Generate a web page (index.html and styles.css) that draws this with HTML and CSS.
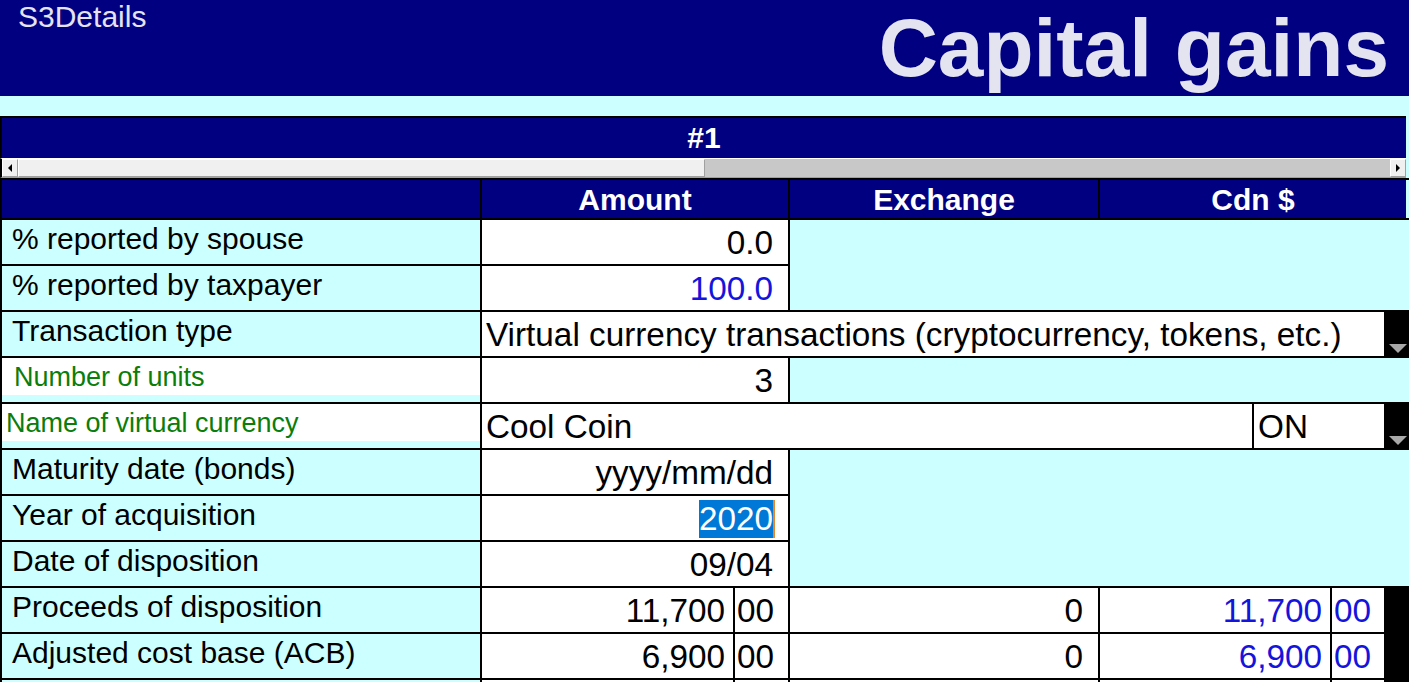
FILE: index.html
```
<!DOCTYPE html>
<html>

<head>
    <link rel="stylesheet" href="styles.css">
</head>

<body>

    <div id="header">
        <div class="form-id">S3Details</div>
        <div class="form-title">Capital gains</div>
    </div>

    <div id="band"></div>

    <div id="sheet">
        <div class="sheet-title">#1</div>
        <div class="hscroll">
            <div class="scroll-btn"><span class="arrow-left"></span></div>
            <div class="scroll-thumb"></div>
            <div class="scroll-track"></div>
            <div class="scroll-btn"><span class="arrow-right"></span></div>
        </div>

        <div class="grid">
            <!-- column heads -->
            <div class="head"></div>
            <div class="head span-2">Amount</div>
            <div class="head">Exchange</div>
            <div class="head span-4 last">Cdn $</div>

            <!-- % spouse / taxpayer -->
            <div class="label">% reported by spouse</div>
            <div class="value span-2">0.0</div>
            <div class="filler span-5 tall-2"></div>

            <div class="label">% reported by taxpayer</div>
            <div class="value span-2 blue">100.0</div>

            <!-- transaction type -->
            <div class="label">Transaction type</div>
            <div class="value left span-6">Virtual currency transactions (cryptocurrency, tokens, etc.)</div>
            <div class="drop"><span class="drop-arrow"></span></div>

            <!-- units -->
            <div class="label input"><span class="green pad">Number of units</span></div>
            <div class="value span-2">3</div>
            <div class="filler span-5"></div>

            <div class="label input"><span class="green">Name of virtual currency</span></div>
            <div class="value left span-4">Cool Coin</div>
            <div class="value left span-2 on">ON</div>
            <div class="drop"><span class="drop-arrow"></span></div>

            <!-- dates -->
            <div class="label">Maturity date (bonds)</div>
            <div class="value span-2">yyyy/mm/dd</div>
            <div class="filler span-5 tall-3"></div>

            <div class="label">Year of acquisition</div>
            <div class="value span-2 sel-cell"><span class="selected">2020</span><span class="caret"></span></div>

            <div class="label">Date of disposition</div>
            <div class="value span-2">09/04</div>

            <!-- amounts -->
            <div class="label">Proceeds of disposition</div>
            <div class="value int">11,700</div>
            <div class="value cents">00</div>
            <div class="value">0</div>
            <div class="value int span-2 blue">11,700</div>
            <div class="value cents blue">00</div>
            <div class="dark"></div>

            <div class="label">Adjusted cost base (ACB)</div>
            <div class="value int">6,900</div>
            <div class="value cents">00</div>
            <div class="value">0</div>
            <div class="value int span-2 blue">6,900</div>
            <div class="value cents blue">00</div>
            <div class="dark"></div>

            <!-- next row, only its top edge is in view -->
            <div class="label"></div>
            <div class="value int"></div>
            <div class="value cents"></div>
            <div class="value"></div>
            <div class="value int span-2"></div>
            <div class="value cents"></div>
            <div class="dark"></div>
        </div>
    </div>

</body>

</html>
```

FILE: styles.css
```
* {
    box-sizing: border-box;
}

body {
    margin: 0px;
    padding: 0px;
    background: #ccffff;
    font-family: "Liberation Sans", Arial, sans-serif;
    overflow: hidden;
}

#header {
    height: 96px;
    background: #000080;
    color: #e4e4f0;
    display: flex;
    justify-content: space-between;
    align-items: flex-start;
}

.form-id {
    font-size: 30px;
    line-height: 34px;
    padding-left: 18px;
    padding-top: 0px;
}

.form-title {
    font-size: 82px;
    font-weight: bold;
    line-height: 92px;
    padding-top: 2px;
    padding-right: 20px;
}

#band {
    height: 20px;
}

#sheet {
    width: 1409px;
}

.sheet-title {
    width: 1406px;
    height: 42px;
    border-top: 2px solid #000;
    border-left: 2px solid #000;
    background: #000080;
    color: #fff;
    font-size: 30px;
    font-weight: bold;
    text-align: center;
    line-height: 40px;
}

/* horizontal scroller under the title */
.hscroll {
    width: 1406px;
    height: 20px;
    display: flex;
    border-left: 2px solid #000;
    background: #c8c8c8;
    border-top: 1px solid #fff;
    border-bottom: 1px solid #a0a0a0;
}

.scroll-btn {
    width: 16px;
    background: #f0f0f0;
    border: 1px solid #a0a0a0;
    border-top-color: #fff;
    border-left-color: #fff;
    display: flex;
    align-items: center;
    justify-content: center;
}

.arrow-left {
    border-top: 4px solid transparent;
    border-bottom: 4px solid transparent;
    border-right: 4px solid #000;
}

.arrow-right {
    border-top: 4px solid transparent;
    border-bottom: 4px solid transparent;
    border-left: 4px solid #000;
}

.scroll-thumb {
    width: 687px;
    background: #f0f0f0;
    border: 1px solid #a0a0a0;
    border-top-color: #fff;
    border-left-color: #fff;
}

.scroll-track {
    flex: 1;
}

/* the form grid, black gaps act as cell borders */
.grid {
    display: grid;
    grid-template-columns: 478px 251px 53px 308px 152px 76px 52px 23px;
    grid-template-rows: 38px;
    grid-auto-rows: 44px;
    gap: 2px;
    padding-top: 2px;
    padding-left: 2px;
    background: #000;
}

.head {
    background: #000080;
    color: #fff;
    font-size: 30px;
    font-weight: bold;
    text-align: center;
    line-height: 40px;
}

.head.last {
    border-right: 3px solid #ccffff;
}

.span-2 {
    grid-column: span 2;
}

.span-4 {
    grid-column: span 4;
}

.span-5 {
    grid-column: span 5;
}

.span-6 {
    grid-column: span 6;
}

.tall-2 {
    grid-row: span 2;
}

.tall-3 {
    grid-row: span 3;
}

.label {
    background: #ccffff;
    font-size: 30px;
    line-height: 34px;
    padding: 2px 0px 0px 10px;
    white-space: nowrap;
}

.label.input {
    padding: 0px;
    background: #ccffff;
}

.label.input span {
    display: block;
    height: 37px;
    background: #fff;
    font-size: 27px;
    line-height: 38px;
    padding-left: 4px;
}

.label.input span.pad {
    padding-left: 12px;
}

.green {
    color: #0a7d0a;
}

.filler {
    background: #ccffff;
}

.value {
    background: #fff;
    font-size: 33.3px;
    line-height: 38px;
    padding: 0px 15px 2px 4px;
    display: flex;
    align-items: flex-end;
    justify-content: flex-end;
    white-space: nowrap;
}

.value.left {
    justify-content: flex-start;
}

.value.on {
    padding-left: 4px;
}

.value.int {
    padding-right: 8px;
}

.value.cents {
    justify-content: flex-start;
    padding-left: 2px;
    padding-right: 0px;
}

.blue {
    color: #1414dc;
}

.sel-cell {
    padding-right: 13px;
}

.selected {
    background: #0078d7;
    color: #fff;
}

.caret {
    display: inline-block;
    width: 2px;
    height: 38px;
    background: #e8862a;
}

.drop {
    background: #000;
    display: flex;
    align-items: flex-end;
    justify-content: center;
    padding-bottom: 3px;
}

.drop-arrow {
    border-left: 9px solid transparent;
    border-right: 9px solid transparent;
    border-top: 9px solid #a8a8a8;
}

.dark {
    background: #000;
}
```
